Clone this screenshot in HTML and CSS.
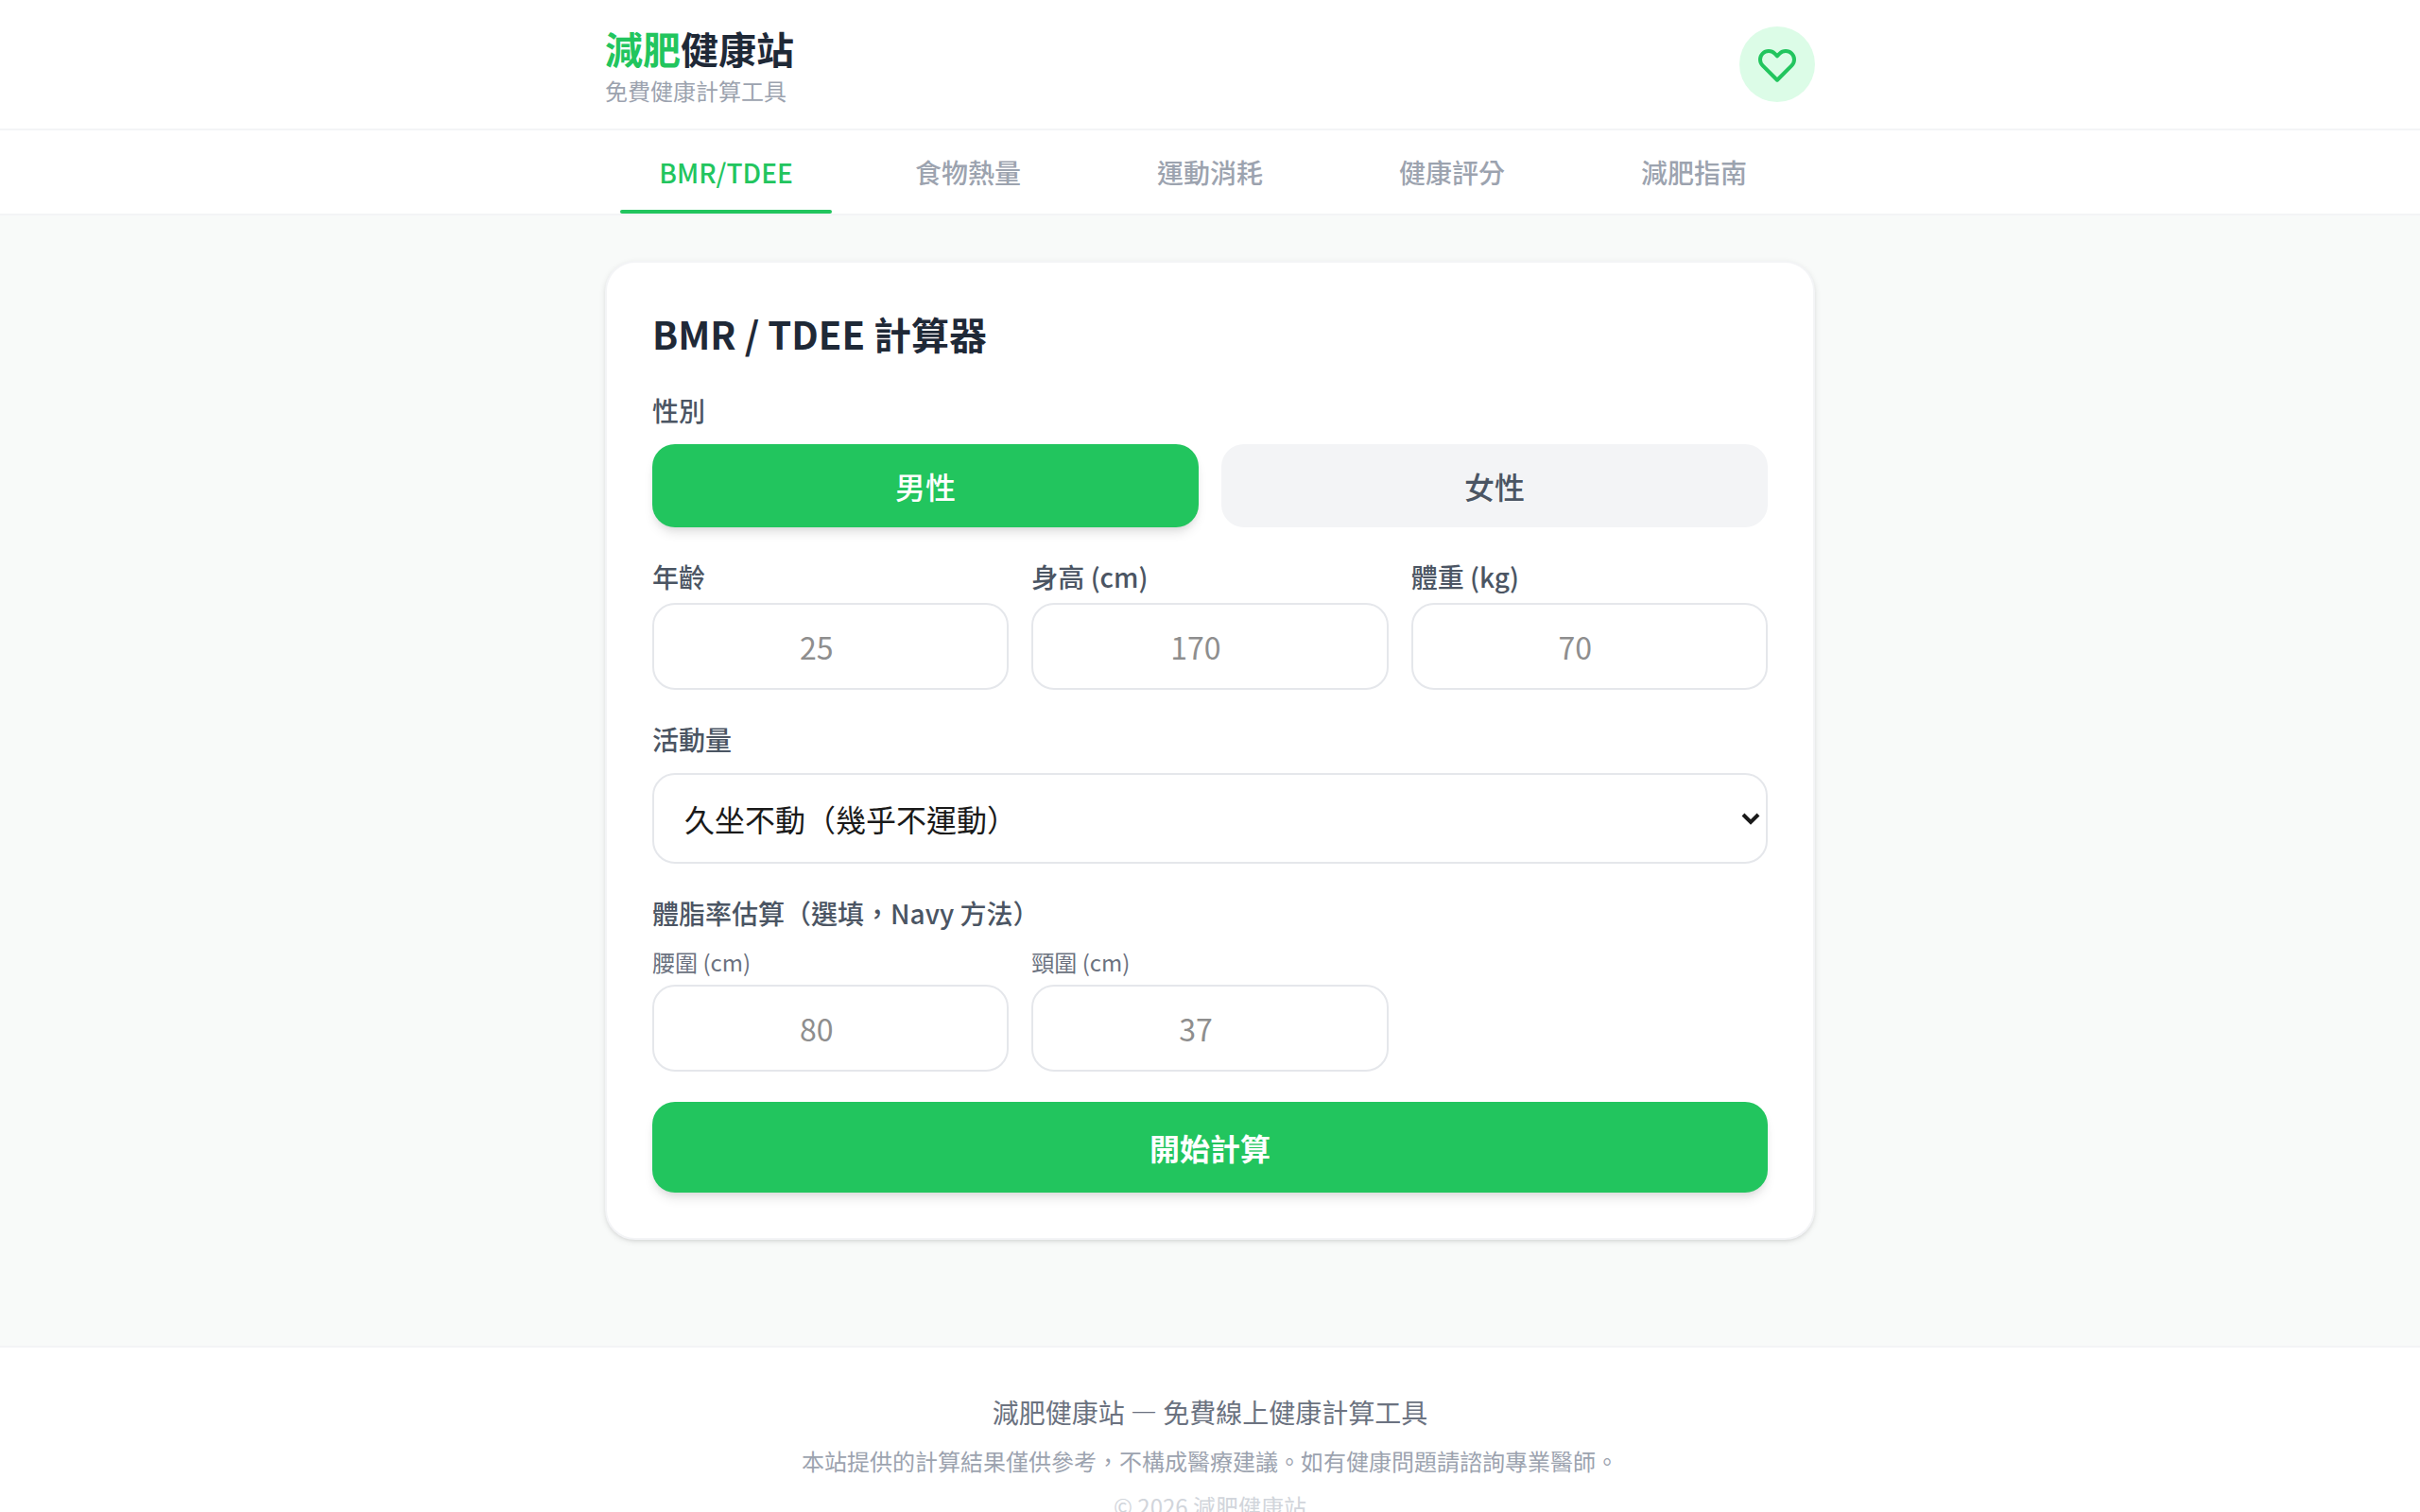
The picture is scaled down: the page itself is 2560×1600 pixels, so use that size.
FILE: index.html
```html
<!DOCTYPE html>
<html lang="zh-TW">
<head>
<meta charset="utf-8">
<meta name="viewport" content="width=device-width, initial-scale=1">
<title>減肥健康站</title>
<link rel="stylesheet" href="styles.css">
</head>
<body>
<header class="site-header">
  <div class="container header-row">
    <div>
      <h1 class="brand"><span class="brand-accent">減肥</span>健康站</h1>
      <p class="tagline">免費健康計算工具</p>
    </div>
    <div class="badge">
      <svg class="badge-icon" viewBox="0 0 24 24" fill="none" stroke="currentColor" stroke-width="2" stroke-linecap="round" stroke-linejoin="round" aria-hidden="true"><path d="M4.318 6.318a4.5 4.5 0 000 6.364L12 20.364l7.682-7.682a4.5 4.5 0 00-6.364-6.364L12 7.636l-1.318-1.318a4.5 4.5 0 00-6.364 0z"/></svg>
    </div>
  </div>
</header>
<nav class="site-nav">
  <div class="container tabs">
    <button type="button" class="tab tab-active">BMR/TDEE</button>
    <button type="button" class="tab">食物熱量</button>
    <button type="button" class="tab">運動消耗</button>
    <button type="button" class="tab">健康評分</button>
    <button type="button" class="tab">減肥指南</button>
  </div>
</nav>
<main class="container main">
  <form class="card">
    <h2 class="card-title">BMR / TDEE 計算器</h2>
    <div class="group" role="group" aria-labelledby="gender-label">
      <span class="label" id="gender-label">性別</span>
      <div class="choices">
        <button type="button" class="choice choice-active">男性</button>
        <button type="button" class="choice">女性</button>
      </div>
    </div>
    <div class="fields">
      <div class="field"><label class="label" for="age">年齡</label><input class="input" type="number" id="age" placeholder="25"></div>
      <div class="field"><label class="label" for="height">身高 (cm)</label><input class="input" type="number" id="height" placeholder="170"></div>
      <div class="field"><label class="label" for="weight">體重 (kg)</label><input class="input" type="number" id="weight" placeholder="70"></div>
    </div>
    <div class="group">
      <label class="label" for="activity">活動量</label>
      <div class="select-wrap">
        <select class="select" id="activity"><option>久坐不動（幾乎不運動）</option></select>
        <svg class="select-arrow" viewBox="0 0 20 14" fill="none" stroke="currentColor" stroke-width="4" aria-hidden="true"><path d="M2 2l8 8 8-8"/></svg>
      </div>
    </div>
    <div class="group" role="group" aria-labelledby="fat-label">
      <span class="label" id="fat-label">體脂率估算（選填，Navy 方法）</span>
      <div class="fields">
        <div class="field"><label class="sublabel" for="waist">腰圍 (cm)</label><input class="input" type="number" id="waist" placeholder="80"></div>
        <div class="field"><label class="sublabel" for="neck">頸圍 (cm)</label><input class="input" type="number" id="neck" placeholder="37"></div>
      </div>
    </div>
    <button type="button" class="submit">開始計算</button>
  </form>
</main>
<footer class="site-footer">
  <p class="footer-title">減肥健康站 — 免費線上健康計算工具</p>
  <p class="footer-note">本站提供的計算結果僅供參考，不構成醫療建議。如有健康問題請諮詢專業醫師。</p>
  <p class="footer-copy">© 2026 減肥健康站</p>
</footer>
</body>
</html>
```
FILE: styles.css
```css
*, *::before, *::after { box-sizing: border-box; }
body {
  margin: 0;
  background: #f8faf9;
  color: #1a1a1a;
  font-family: "Noto Sans CJK TC", sans-serif;
  font-size: 32px;
  line-height: 48px;
}
h1, h2, p { margin: 0; }
button, input, select { font: inherit; color: inherit; margin: 0; }
button { border: 0; cursor: pointer; }

.container { max-width: 1280px; margin: 0 auto; }

.site-header { background: #fff; border-bottom: 2px solid #f3f4f6; }
.header-row { display: flex; align-items: center; justify-content: space-between; padding: 24px 0; }
.brand { padding-bottom: 2px; font-size: 40px; line-height: 54px; font-weight: 700; color: #1f2937; }
.brand-accent { color: #22c55e; }
.tagline { font-size: 24px; line-height: 32px; color: #9ca3af; }
.badge {
  display: flex; align-items: center; justify-content: center;
  width: 80px; height: 80px; border-radius: 50%;
  background: #dcfce7; color: #22c55e;
}
.badge-icon { width: 48px; height: 48px; }

.site-nav { background: #fff; border-bottom: 2px solid #f3f4f6; }
.tabs { display: flex; }
.tab {
  position: relative; flex: 1; padding: 24px 0; background: none;
  font-size: 28px; line-height: 40px; font-weight: 500; color: #9ca3af;
}
.tab-active { color: #22c55e; }
.tab-active::after {
  content: ""; position: absolute; left: 16px; right: 16px; bottom: 0;
  height: 4px; border-radius: 2px; background: #22c55e;
}

.main { padding: 48px 0; }
.card {
  display: flex; flex-direction: column; gap: 32px;
  padding: 48px; border: 2px solid #f3f4f6; border-radius: 32px; background: #fff;
  box-shadow: 0 2px 6px rgba(0, 0, 0, .1), 0 2px 4px -2px rgba(0, 0, 0, .1);
}
.card-title { padding-bottom: 2px; font-size: 40px; line-height: 54px; font-weight: 700; color: #1f2937; }
.group { display: flex; flex-direction: column; gap: 16px; }
.field { display: flex; flex-direction: column; gap: 8px; min-width: 0; }
.label { font-size: 28px; line-height: 40px; font-weight: 500; color: #4b5563; }
.sublabel { font-size: 24px; line-height: 32px; color: #6b7280; }
.choices { display: grid; grid-template-columns: repeat(2, 1fr); gap: 24px; }
.fields { display: grid; grid-template-columns: repeat(3, 1fr); gap: 24px; }
.choice {
  padding: 20px 0; border-radius: 24px;
  font-weight: 500; background: #f3f4f6; color: #4b5563;
}
.choice-active {
  background: #22c55e; color: #fff;
  box-shadow: 0 8px 12px -2px rgba(0, 0, 0, .1), 0 4px 8px -4px rgba(0, 0, 0, .1);
}
.input, .select {
  width: 100%; border: 2px solid #e5e7eb; border-radius: 24px;
  background: #fff; outline: none; appearance: none;
}
.input { height: 92px; padding: 20px 54px 20px 24px; text-align: center; appearance: textfield; }
.input::-webkit-inner-spin-button { appearance: none; margin: 0; }
.input::placeholder { color: #8e8e8e; }
.select-wrap { position: relative; display: flex; }
.select { height: 96px; padding: 0 32px; }
.select-arrow {
  position: absolute; right: 8px; top: 42px; width: 20px; height: 14px; pointer-events: none;
}
.submit {
  padding: 24px 0; border-radius: 24px; background: #22c55e; color: #fff; font-weight: 700;
  box-shadow: 0 8px 12px -2px rgba(0, 0, 0, .1), 0 4px 8px -4px rgba(0, 0, 0, .1);
}

.site-footer {
  display: flex; flex-direction: column; gap: 16px;
  margin-top: 64px; padding: 48px 32px;
  border-top: 2px solid #f3f4f6; background: #fff; text-align: center;
}
.footer-title { font-size: 28px; line-height: 40px; color: #6b7280; }
.footer-note { font-size: 24px; line-height: 32px; color: #9ca3af; }
.footer-copy { font-size: 24px; line-height: 32px; color: #d1d5db; }
```
